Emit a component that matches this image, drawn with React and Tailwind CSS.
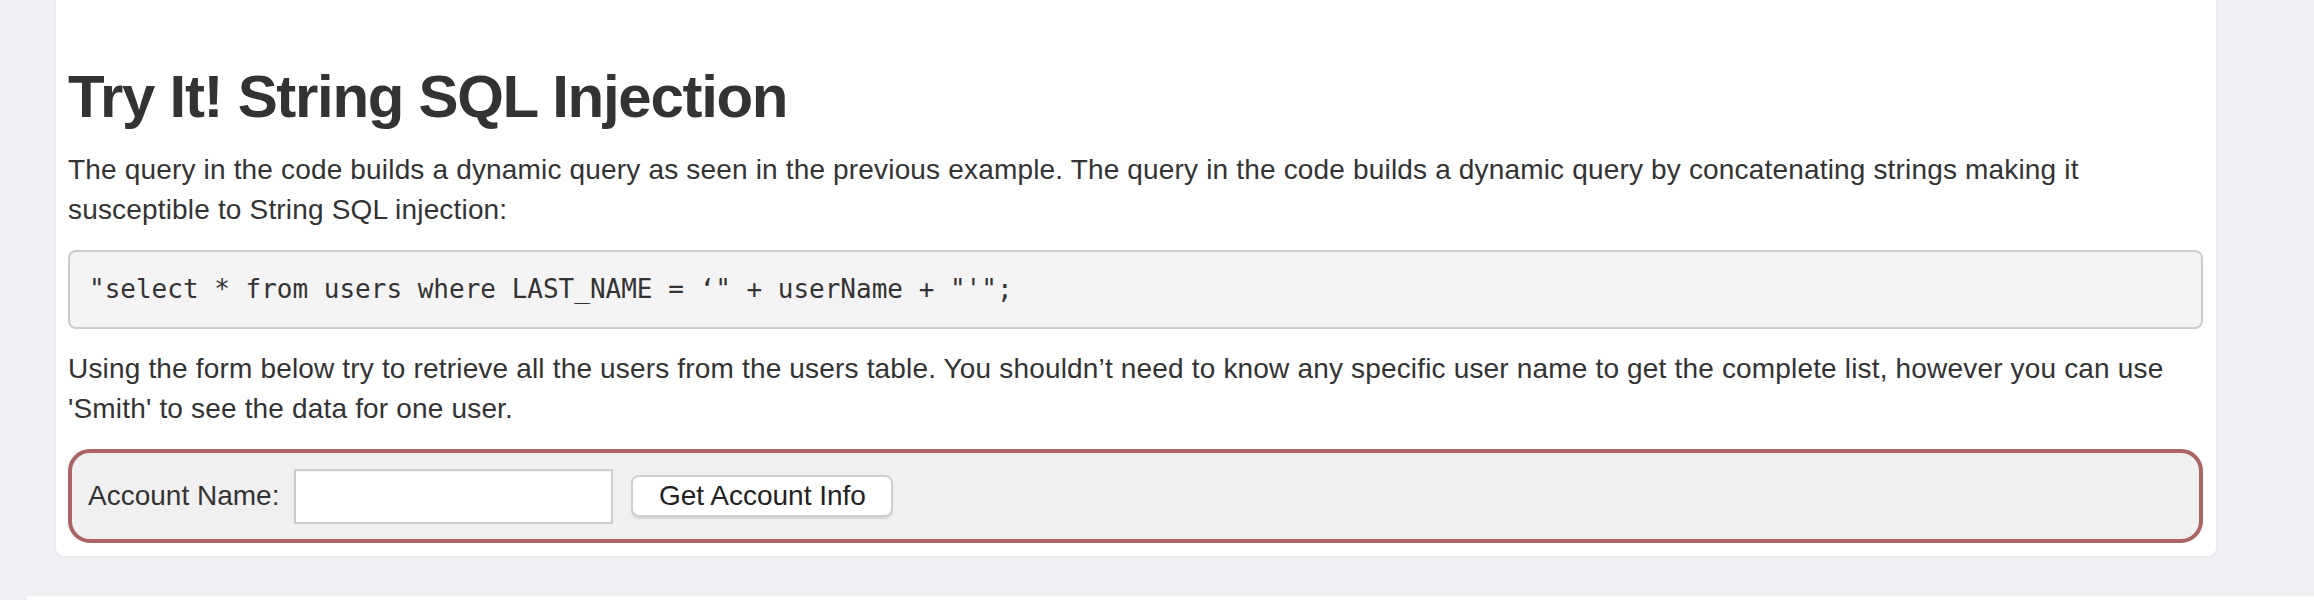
import React, { useState } from 'react';

const AttackForm = () => {
  const [account, setAccount] = useState('');

  return (
    <form
      onSubmit={(e) => e.preventDefault()}
      className="flex items-center h-[94px] pl-[16px] border-[4px] border-[#ab6565] rounded-[22px] bg-[#f0f0f0]"
    >
      <label className="text-[28px] leading-[40px] text-[#333] mr-[15px]">Account Name:</label>
      <input
        type="text"
        value={account}
        onChange={(e) => setAccount(e.target.value)}
        className="w-[319px] h-[55px] bg-white border-2 border-[#cccccc] shadow-[inset_0_1px_1px_rgba(0,0,0,0.06)] outline-none px-2 text-[28px] mr-[18px]"
      />
      <button
        type="submit"
        className="w-[262px] h-[42px] bg-white border-2 border-[#cfcfcf] rounded-[8px] shadow-[0_2px_1px_rgba(0,0,0,0.1)] text-[28px] leading-[36px] text-[#222]"
      >
        Get Account Info
      </button>
    </form>
  );
};

const App = () => {
  return (
    <div className="min-h-screen bg-[#eff1f5] font-['Liberation_Sans',Arial,sans-serif] text-[#333]">
      <div className="pl-[56px] w-[2216px]">
        <div className="bg-white rounded-b-[8px] shadow-[0_1px_3px_rgba(0,0,0,0.06)] pl-[12px] pr-[13px] pt-[64px] pb-[13px]">
          <h2 className="text-[60px] leading-[66px] font-bold tracking-[-1.3px] text-[#333] mb-[20px]">
            Try It! String SQL Injection
          </h2>
          <p className="text-[28px] leading-[40px] tracking-[0.17px] mb-[20px]">
            The query in the code builds a dynamic query as seen in the previous example. The query in the code builds a
            dynamic query by concatenating strings making it susceptible to String SQL injection:
          </p>
          <pre className="font-['DejaVu_Sans_Mono',monospace] text-[26px] leading-[37px] text-[#333] bg-[#f4f4f4] border-2 border-[#cccccc] rounded-[8px] p-[19px] mb-[20px]">
            "select * from users where LAST_NAME = ‘" + userName + "'";
          </pre>
          <p className="text-[28px] leading-[40px] tracking-[0.17px] mb-[20px]">
            Using the form below try to retrieve all the users from the users table. You shouldn’t need to know any
            specific user name to get the complete list, however you can use 'Smith' to see the data for one user.
          </p>
          <AttackForm />
        </div>
      </div>
      <div className="mt-[40px] ml-[27px] h-[100px] bg-white" />
    </div>
  );
};

export default App;
